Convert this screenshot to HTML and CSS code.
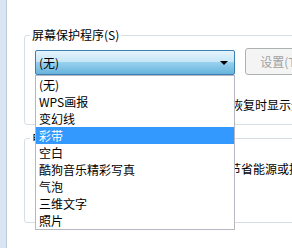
FILE: index.html
```html
<!DOCTYPE html>
<html lang="zh-CN">
<head>
    <meta charset="UTF-8">
    <title>屏幕保护程序设置</title>
    <link rel="stylesheet" href="styles.css">
</head>
<body>

<div class="frame"></div>

<div class="content">
    <fieldset class="group saver">
        <legend>屏幕保护程序(S)</legend>

        <div class="combo-row">
            <div class="combo">
                <div class="combo-box">
                    <span>(无)</span>
                    <span class="arrow"></span>
                </div>
                <ul class="drop-list">
                    <li>(无)</li>
                    <li>WPS画报</li>
                    <li>变幻线</li>
                    <li class="selected">彩带</li>
                    <li>空白</li>
                    <li>酷狗音乐精彩写真</li>
                    <li>气泡</li>
                    <li>三维文字</li>
                    <li>照片</li>
                </ul>
            </div>
            <button class="btn" disabled>设置(T)...</button>
            <button class="btn" disabled>预览(V)</button>
        </div>

        <div class="wait-row">
            <div class="wait">
                <span>等待(W):</span>
                <span class="spin">1</span>
                <span>分钟</span>
            </div>
            <span class="check"></span>
            <span class="resume">在恢复时显示登录屏幕(R)</span>
        </div>
    </fieldset>

    <fieldset class="group power">
        <legend>电源管理</legend>
        <div class="power-row">
            <span class="power-icon"></span>
            <span class="power-text">调整显示亮度和其他电源设置以节省能源或提供最佳性能。</span>
        </div>
    </fieldset>
</div>

</body>
</html>
```

FILE: styles.css
```css
body { margin: 0; display: flex; height: 248px; overflow: hidden; background: #fff; font-family: "Noto Sans CJK SC", sans-serif; font-size: 12px; color: #000; }
.frame { width: 6px; flex: none; background: #d9e5f3; border-right: 1px solid #bccbdc; }
.content { flex: none; width: 400px; padding: 27px 0 0 17px; }

.group { margin: 0; padding: 0 0 0 10px; border: 1px solid #d5dfe5; border-radius: 3px; }
.group legend { margin-left: -5px; padding: 0 2px; line-height: 16px; }
.saver { height: 96px; }
.power { margin-top: 5px; height: 91px; }

.combo-row { display: flex; align-items: flex-start; margin-top: 5px; }
.combo { position: relative; width: 200px; margin-top: 2px; }
.combo-box { display: flex; align-items: center; justify-content: space-between; height: 23px; padding: 0 6px 0 3px; border: 1px solid #3c7fb1; border-radius: 2px; background: linear-gradient(#e5f4fc, #c4e5f6 50%, #98d1ef 50%, #68b3db); }
.arrow { width: 0; height: 0; border-left: 4px solid transparent; border-right: 4px solid transparent; border-top: 4px solid #000; }

.drop-list { position: absolute; top: 25px; left: 0; width: 198px; margin: 0; padding: 0; list-style: none; background: #fff; border: 1px solid #b7b7c4; z-index: 2; }
.drop-list li { height: 17px; line-height: 17px; padding-left: 3px; white-space: nowrap; }
.drop-list .selected { background: #3399ff; color: #fff; }

.btn { flex: none; height: 27px; width: 80px; margin-left: 10px; padding: 0; font: inherit; color: #a0a0a0; background: #f4f4f4; border: 1px solid #adb2b5; border-radius: 3px; }

.wait-row { display: flex; align-items: center; height: 22px; margin-top: 18px; white-space: nowrap; }
.wait { display: flex; align-items: center; gap: 4px; width: 167px; }
.spin { width: 40px; height: 20px; border: 1px solid #abadb3; }
.check { width: 11px; height: 11px; margin-right: 4px; border: 1px solid #8f8f8f; }

.power-row { display: flex; align-items: center; margin-top: 12px; white-space: nowrap; }
.power-icon { width: 20px; height: 20px; margin-right: 6px; background: #c9d9ea; }
```
